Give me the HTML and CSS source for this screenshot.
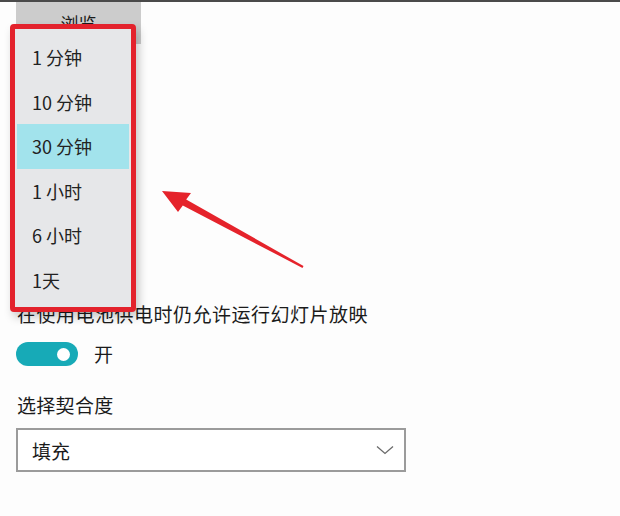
FILE: index.html
```html
<!DOCTYPE html>
<html lang="zh-CN">
<head>
<meta charset="utf-8">
<link rel="stylesheet" href="styles.css">
</head>
<body>
<div class="page">
  <div class="browse">浏览</div>
  <div class="battery">在使用电池供电时仍允许运行幻灯片放映</div>
  <div class="toggle-row">
    <span class="toggle"><span class="knob"></span></span>
    <span class="toggle-label">开</span>
  </div>
  <div class="fit-label">选择契合度</div>
  <div class="select">
    <span>填充</span>
    <svg class="chev" width="18" height="10" viewBox="0 0 18 10"><path d="M1 1.5 L9 8.5 L17 1.5" fill="none" stroke="#6a6a6a" stroke-width="1.3"/></svg>
  </div>

  <ul class="menu">
    <li class="item">1 分钟</li>
    <li class="item">10 分钟</li>
    <li class="item selected">30 分钟</li>
    <li class="item">1 小时</li>
    <li class="item">6 小时</li>
    <li class="item">1天</li>
  </ul>

  <svg class="arrow" width="620" height="516" viewBox="0 0 620 516">
    <polygon points="162,191 191,193 186.2,199.4 303.5,266.1 302.5,267.9 182.8,205.6 178,212" fill="#e5232b"/>
  </svg>
</div>
</body>
</html>
```
FILE: styles.css
```css
html, body {
  margin: 0;
  padding: 0;
  background: #fdfdfd;
}
body {
  font-family: "Noto Sans CJK SC", "Noto Sans", sans-serif;
  font-size: 19px;
  color: #1b1b1b;
  border-top: 2px solid #4a4a4a;
  height: 514px;
  overflow: hidden;
}
.page {
  position: relative;
  padding-left: 16px;
  height: 514px;
}
.browse {
  width: 125px;
  height: 42px;
  background: #cccccc;
  display: flex;
  align-items: center;
  justify-content: center;
  line-height: 24px;
  font-size: 18px;
}
.battery {
  margin-top: 258px;
  line-height: 24px;
  height: 24px;
  margin-left: 1px;
  letter-spacing: 0.5px;
}
.toggle-row {
  margin-top: 16px;
  display: flex;
  align-items: center;
  gap: 16px;
  height: 24px;
}
.toggle {
  width: 62px;
  height: 24px;
  border-radius: 12px;
  background: #17aab7;
  display: flex;
  align-items: center;
  justify-content: flex-end;
  padding-right: 8px;
  box-sizing: border-box;
}
.knob {
  width: 13px;
  height: 13px;
  border-radius: 50%;
  background: #ffffff;
}
.toggle-label {
  line-height: 24px;
}
.fit-label {
  margin-top: 27px;
  line-height: 24px;
  margin-left: 1px;
  letter-spacing: 0.3px;
}
.select {
  margin-top: 11px;
  width: 390px;
  height: 44px;
  box-sizing: border-box;
  border: 2px solid #9b9b9b;
  background: #ffffff;
  display: flex;
  align-items: center;
  justify-content: space-between;
  padding: 0 10px 0 14px;
}
.menu {
  position: absolute;
  left: 10px;
  top: 22px;
  width: 126px;
  height: 288px;
  box-sizing: border-box;
  margin: 0;
  padding: 6px 0 0;
  list-style: none;
  background: #e6e7e9;
  border: 5px solid #e3222c;
  border-radius: 4px;
  box-shadow: 3px 5px 10px rgba(0, 0, 0, 0.22);
  font-size: 18px;
}
.item {
  height: 44.6px;
  line-height: 44.6px;
  padding-left: 17px;
  color: #222;
}
.selected {
  background: #a2e3ec;
  margin: 0 2px;
  padding-left: 15px;
}
.arrow {
  position: absolute;
  left: 0;
  top: -2px;
  pointer-events: none;
}
```
